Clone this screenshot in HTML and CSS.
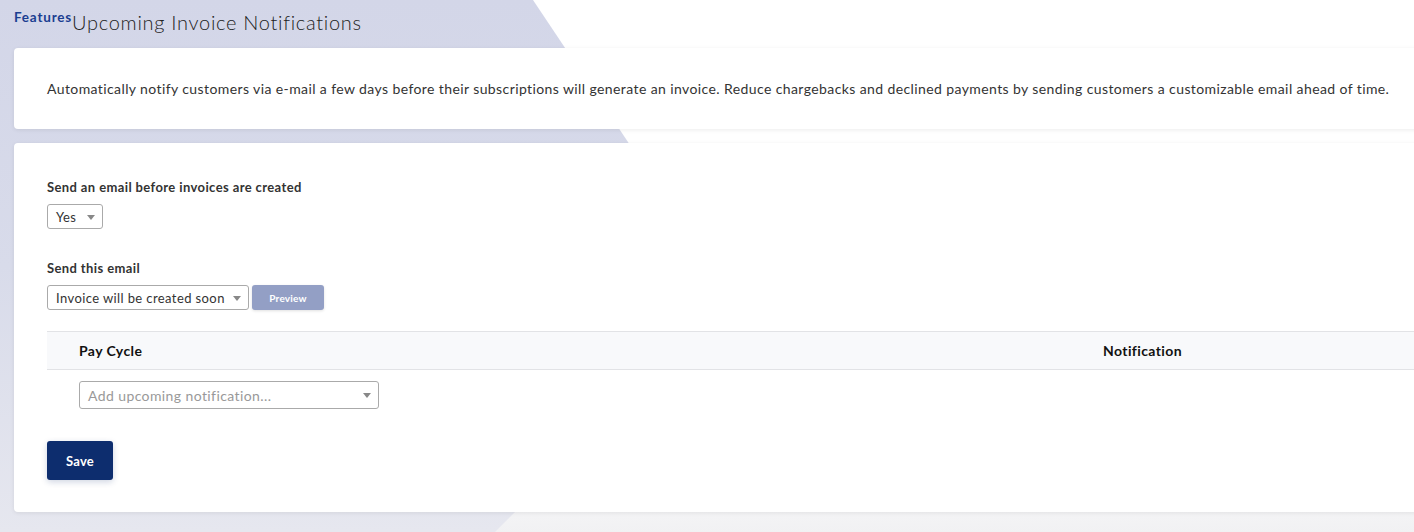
FILE: index.html
```html
<!DOCTYPE html>
<html lang="en">
<head>
    <meta charset="UTF-8">
    <meta name="viewport" content="width=device-width, initial-scale=1.0">
    <title>Upcoming Invoice Notifications</title>
    <link rel="stylesheet" href="styles.css">
</head>
<body>

<div class="backdrop"></div>

<div class="page">
    <div class="page-header">
        <span class="crumb">Features</span>
        <h1 class="page-title">Upcoming Invoice Notifications</h1>
    </div>

    <div class="card intro">
        <p>Automatically notify customers via e-mail a few days before their subscriptions will generate an invoice. Reduce chargebacks and declined payments by sending customers a customizable email ahead of time.</p>
    </div>

    <div class="card settings">
        <div class="field field-toggle">
            <label class="field-label">Send an email before invoices are created</label>
            <div class="select select-yes">
                <span>Yes</span>
            </div>
        </div>

        <div class="field field-email">
            <label class="field-label">Send this email</label>
            <div class="field-row">
                <div class="select select-email">
                    <span>Invoice will be created soon</span>
                </div>
                <button class="btn btn-preview">Preview</button>
            </div>
        </div>

        <div class="schedule">
            <div class="schedule-head">
                <div class="col">Pay Cycle</div>
                <div class="col">Notification</div>
            </div>
            <div class="schedule-row">
                <div class="col">
                    <div class="select select-add">
                        <span class="placeholder">Add upcoming notification...</span>
                    </div>
                </div>
            </div>
        </div>

        <button class="btn btn-save">Save</button>
    </div>
</div>

</body>
</html>
```

FILE: styles.css
```css
html, body {
    margin: 0;
    padding: 0;
    overflow: hidden;
}

body {
    font-family: Lato, "Open Sans", sans-serif;
    letter-spacing: 0.025em;
    color: #333;
    background: linear-gradient(to bottom, #ffffff 0%, #ffffff 80%, #f1f1f3 100%);
    min-height: 532px;
    position: relative;
}

/* decorative lavender wedge behind the cards */
.backdrop {
    position: absolute;
    top: 0;
    left: 0;
    width: 900px;
    height: 532px;
    background: linear-gradient(to bottom, #d3d6e8 0%, #d8dbea 50%, #e6e7ef 100%);
    clip-path: polygon(0 0, 533px 0, 731px 296px, 495px 532px, 0 532px);
    z-index: 0;
}

.page {
    position: relative;
    z-index: 1;
    padding: 0 0 20px 14px;
}

.page-header {
    display: flex;
    align-items: flex-start;
    height: 48px;
}

.crumb {
    font-size: 13.5px;
    font-weight: 700;
    letter-spacing: 0.06em;
    color: #1b3e91;
    margin-top: 9px;
}

.page-title {
    margin: 10px 0 0;
    font-size: 20px;
    font-weight: 300;
    letter-spacing: 0.035em;
    color: #222;
}

.card {
    background: #fff;
    border-radius: 4px;
    width: 1440px;
    box-sizing: border-box;
    box-shadow: 0 1px 4px rgba(0, 0, 0, 0.08);
}

.intro {
    height: 81px;
    display: flex;
    align-items: center;
    padding: 0 33px;
}

.intro p {
    margin: 0;
    font-size: 14px;
    color: #333;
}

.settings {
    margin-top: 14px;
    height: 369px;
    padding: 36px 33px 0;
}

.field-toggle {
    margin-bottom: 31px;
}

.field-email {
    margin-bottom: 21px;
}

.field-label {
    display: block;
    font-size: 13px;
    font-weight: 700;
    letter-spacing: 0.03em;
    color: #333;
    margin-bottom: 9px;
}

.field-row {
    display: flex;
    align-items: center;
    gap: 3px;
}

.select {
    position: relative;
    box-sizing: border-box;
    height: 25px;
    border: 1px solid #aaa;
    border-radius: 3px;
    background: #fff;
    font-size: 13px;
    color: #333;
    white-space: nowrap;
    display: flex;
    align-items: center;
    padding: 0 18px 0 8px;
}

.select::after {
    content: "";
    position: absolute;
    right: 7px;
    top: 50%;
    margin-top: -2px;
    border-left: 4px solid transparent;
    border-right: 4px solid transparent;
    border-top: 5px solid #888;
}

.select-yes {
    width: 56px;
}

.select-email {
    width: 202px;
}

.select-add {
    width: 300px;
    height: 28px;
    font-size: 14px;
}

.placeholder {
    color: #999;
}

.btn {
    font-family: Lato, "Open Sans", sans-serif;
    letter-spacing: 0.02em;
    border: none;
    border-radius: 3px;
    color: #fff;
    font-weight: 700;
    cursor: pointer;
}

.btn-preview {
    width: 72px;
    height: 25px;
    font-size: 10px;
    background-color: #939fc5;
    box-shadow: 0 1px 3px rgba(0, 0, 0, 0.12);
}

.schedule {
    margin-bottom: 32px;
}

.schedule-head {
    display: grid;
    grid-template-columns: 1024px 1fr;
    height: 37px;
    align-items: center;
    background: #f8f9fb;
    border-top: 1px solid #e2e3e6;
    border-bottom: 1px solid #e2e3e6;
    font-size: 14px;
    font-weight: 700;
    color: #111;
}

.col {
    padding-left: 32px;
}

.schedule-row {
    padding-top: 11px;
}

.btn-save {
    width: 66px;
    height: 39px;
    font-size: 13px;
    background-color: #0d2d6e;
    box-shadow: 0 2px 6px rgba(13, 45, 110, 0.2);
}
```
